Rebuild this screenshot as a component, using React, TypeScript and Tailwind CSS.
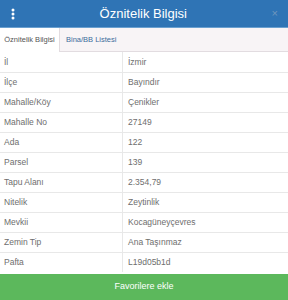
import React from 'react';

const rows: [string, string][] = [
  ['İl', 'İzmir'],
  ['İlçe', 'Bayındır'],
  ['Mahalle/Köy', 'Çenikler'],
  ['Mahalle No', '27149'],
  ['Ada', '122'],
  ['Parsel', '139'],
  ['Tapu Alanı', '2.354,79'],
  ['Nitelik', 'Zeytinlik'],
  ['Mevkii', 'Kocagüneyçevres'],
  ['Zemin Tip', 'Ana Taşınmaz'],
  ['Pafta', 'L19d05b1d'],
];

const App: React.FC = () => {
  return (
    <div className="w-[288px] h-[300px] flex flex-col bg-white overflow-hidden" style={{ fontFamily: '"Liberation Sans", Arial, sans-serif' }}>
      <div className="h-[28px] bg-[#2f74b5] border-b border-[#6aa0d0] flex items-center justify-between px-[10px] shrink-0">
        <svg width="4" height="12" viewBox="0 0 4 12" className="ml-[1px]">
          <circle cx="2" cy="2" r="1.5" fill="#fff" />
          <circle cx="2" cy="6" r="1.5" fill="#fff" />
          <circle cx="2" cy="10" r="1.5" fill="#fff" />
        </svg>
        <span className="text-white text-[13px]">Öznitelik Bilgisi</span>
        <span className="text-[#6f96bd] text-[11px] leading-none">×</span>
      </div>
      <div className="h-[24px] bg-[#f8f4f6] border-b border-[#e2dce0] flex items-end shrink-0">
        <div className="h-[24px] w-[60px] bg-white border-r border-[#e2dce0] flex items-center justify-center text-[7.5px] text-[#555] -mb-[1px]">
          Öznitelik Bilgisi
        </div>
        <div className="h-[23px] flex items-center pl-[6px] text-[7.5px] text-[#3b6c9c]">Bina/BB Listesi</div>
      </div>
      <div className="flex-1 flex flex-col">
        {rows.map(([k, v], i) => (
          <div key={k} className={`h-[20px] flex items-center text-[8.5px] text-[#6e6e6e] ${i > 0 ? 'border-t border-[#e8e8e8]' : ''}`}>
            <div className="w-[123px] h-full flex items-center pl-[4px] border-r border-[#e8e8e8]">{k}</div>
            <div className="pl-[5px]">{v}</div>
          </div>
        ))}
      </div>
      <div className="h-[26px] bg-[#5cb85c] flex items-center justify-center text-white text-[9px] shrink-0">
        Favorilere ekle
      </div>
    </div>
  );
};

export default App;
